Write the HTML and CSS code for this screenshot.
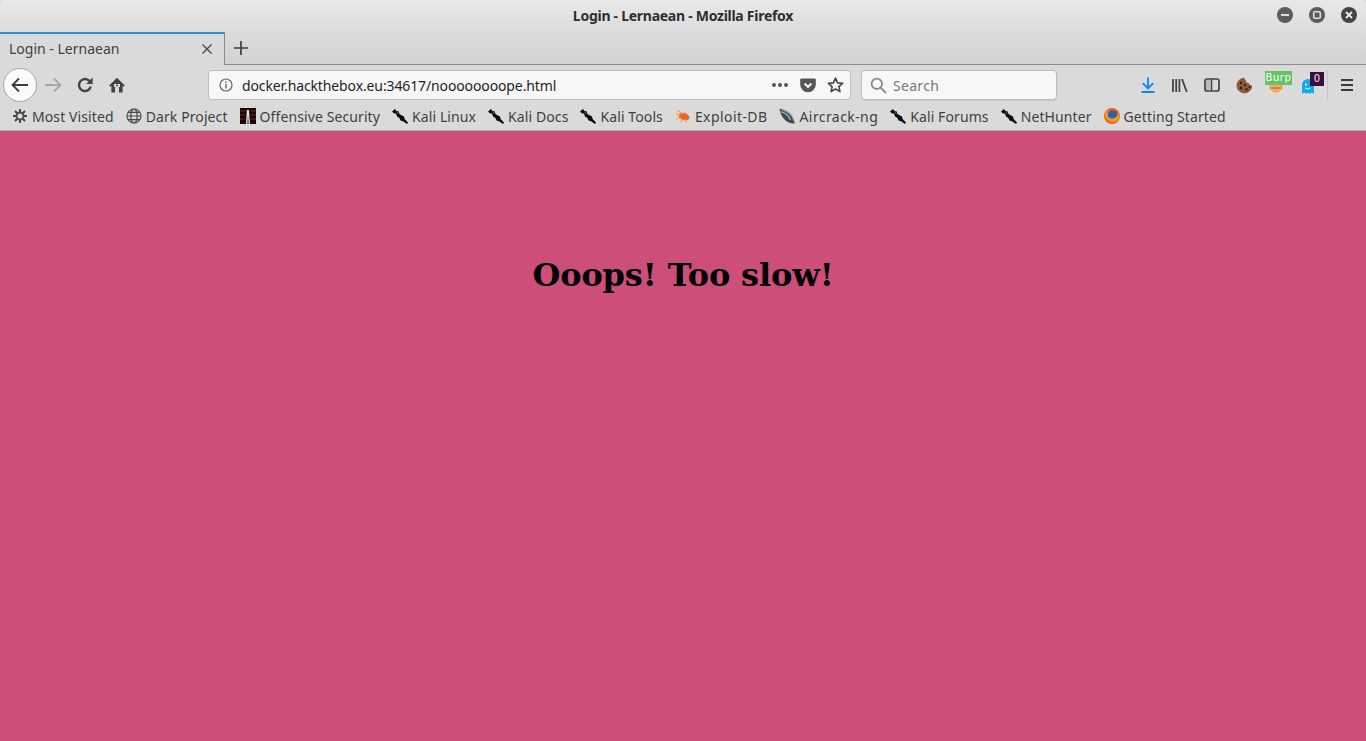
FILE: index.html
```html
<!DOCTYPE html>
<html lang="en">
<head>
  <meta charset="UTF-8">
  <meta name="viewport" content="width=device-width, initial-scale=1.0">
  <title>Login - Lernaean</title>
  <link rel="stylesheet" href="styles.css">
</head>
<body>
  <svg width="0" height="0" class="defs">
    <symbol id="kali" viewBox="0 0 16 16">
      <path d="M0 3.5 L3 1 L4.5 3 L6.5 3.2 L7.5 6 L10 7.6 L12 8.6 L12.6 11 L16 14.6 L15 16 L11 13.2 L8.6 12.6 L7.4 10 L5 8.4 L4 5.4 L2 5.6 Z" fill="#0a0a0a"/>
      <path d="M4.6 3.6 L6.4 6" stroke="#8a8a8a" stroke-width="0.8"/>
    </symbol>
  </svg>

  <header class="browser">
    <div class="titlebar">
      <span class="window-title">Login - Lernaean - Mozilla Firefox</span>
      <div class="window-controls">
        <span class="win-btn"><svg width="16" height="16" viewBox="0 0 16 16"><rect x="4" y="7" width="8" height="2" fill="#ddd"/></svg></span>
        <span class="win-btn"><svg width="16" height="16" viewBox="0 0 16 16"><rect x="4.7" y="4.7" width="6.6" height="6.6" rx="1" fill="none" stroke="#ddd" stroke-width="1.6"/></svg></span>
        <span class="win-btn win-close"><svg width="16" height="16" viewBox="0 0 16 16"><path d="M5 5 L11 11 M11 5 L5 11" stroke="#eee" stroke-width="1.8"/></svg></span>
      </div>
    </div>

    <div class="tabstrip">
      <div class="tab">
        <span class="tab-label">Login - Lernaean</span>
        <svg class="tab-close" width="12" height="12" viewBox="0 0 12 12"><path d="M1.5 1.5 L10.5 10.5 M10.5 1.5 L1.5 10.5" stroke="#4a4a4a" stroke-width="1.4"/></svg>
      </div>
      <div class="tab-rest">
        <svg class="new-tab" width="16" height="16" viewBox="0 0 16 16"><path d="M8 1 V15 M1 8 H15" stroke="#3c3c3c" stroke-width="1.7"/></svg>
      </div>
    </div>

    <div class="navbar">
      <div class="nav-left">
        <span class="back-btn"><svg width="18" height="16" viewBox="0 0 18 16"><path d="M1.5 8 H17 M8 1.5 L1.5 8 L8 14.5" fill="none" stroke="#3d3d3d" stroke-width="1.8"/></svg></span>
        <span class="nav-btn"><svg width="18" height="16" viewBox="0 0 18 16"><path d="M1 8 H16.5 M10 1.5 L16.5 8 L10 14.5" fill="none" stroke="#a6a6a6" stroke-width="1.8"/></svg></span>
        <span class="nav-btn"><svg width="16" height="16" viewBox="0 0 16 16"><path d="M13.8 9.5 A6 6 0 1 1 11.8 3.4 L13.8 5.2" fill="none" stroke="#444" stroke-width="2.4"/><path d="M15.6 0.6 V7 H9.2 Z" fill="#444"/></svg></span>
        <span class="nav-btn"><svg width="16" height="16" viewBox="0 0 16 16"><path d="M0.2 8.4 L8 0.8 L15.8 8.4 L14.6 9.7 L13.6 8.8 V15.4 H9.8 V11 H6.2 V15.4 H2.4 V8.8 L1.4 9.7 Z" fill="#444"/><rect x="5" y="7" width="6" height="3" fill="#dadada"/><rect x="6.2" y="10" width="3.6" height="5.4" fill="#dadada"/><rect x="7" y="7.8" width="2" height="1.4" fill="#444"/></svg></span>
      </div>

      <div class="urlbar">
        <svg class="info-icon" width="14" height="14" viewBox="0 0 14 14"><circle cx="7" cy="7" r="6" fill="none" stroke="#666" stroke-width="1.2"/><rect x="6.3" y="6" width="1.4" height="4.4" fill="#666"/><rect x="6.3" y="3.5" width="1.4" height="1.5" fill="#666"/></svg>
        <span class="url-text">docker.hackthebox.eu:34617/noooooooope.html</span>
        <span class="url-dots">
          <i></i><i></i><i></i>
        </span>
        <svg class="pocket" width="16" height="15" viewBox="0 0 16 15"><path d="M1.5 0.5 H14.5 A1.3 1.3 0 0 1 15.8 1.8 V6.5 A7.8 7.8 0 0 1 0.2 6.5 V1.8 A1.3 1.3 0 0 1 1.5 0.5 Z" fill="#555"/><path d="M4.5 5.5 L8 8.8 L11.5 5.5" fill="none" stroke="#f6f6f6" stroke-width="2"/></svg>
        <svg class="star" width="17" height="16" viewBox="0 0 17 16"><path d="M8.5 1.2 L10.6 5.8 L15.6 6.3 L11.9 9.6 L12.9 14.6 L8.5 12.1 L4.1 14.6 L5.1 9.6 L1.4 6.3 L6.4 5.8 Z" fill="none" stroke="#4a4a4a" stroke-width="1.7" stroke-linejoin="round"/></svg>
      </div>

      <div class="searchbar">
        <svg width="17" height="17" viewBox="0 0 17 17"><circle cx="6.8" cy="6.8" r="5.2" fill="none" stroke="#8a8a8a" stroke-width="1.8"/><path d="M10.6 10.6 L16 16" stroke="#8a8a8a" stroke-width="2"/></svg>
        <span class="search-text">Search</span>
      </div>

      <div class="nav-right">
        <span class="tool-btn"><svg width="14" height="16" viewBox="0 0 14 16"><path d="M7 0.5 V11 M1.8 6.2 L7 11.4 L12.2 6.2 M0.5 15 H13.5" fill="none" stroke="#0a84ff" stroke-width="1.8"/></svg></span>
        <span class="tool-btn"><svg width="16" height="15" viewBox="0 0 16 15"><path d="M1 1 V14 M4.2 1 V14 M7.4 1 V14 M10 1 L14.8 14" fill="none" stroke="#444" stroke-width="1.8"/></svg></span>
        <span class="tool-btn"><svg width="16" height="14" viewBox="0 0 16 14"><rect x="1" y="1" width="14" height="12" rx="2" fill="none" stroke="#444" stroke-width="1.7"/><rect x="2" y="2" width="5" height="10" fill="#bbb"/><path d="M7.6 1 V13" stroke="#444" stroke-width="1.4"/></svg></span>
        <span class="tool-btn"><svg width="17" height="17" viewBox="0 0 17 17"><path d="M8.5 0.8 A7.8 7.8 0 1 0 16.2 8.5 A3 3 0 0 1 13 6.2 A3 3 0 0 1 9.8 3.6 A3 3 0 0 1 8.5 0.8 Z" fill="#8f5a38"/><g fill="#2c1a10"><circle cx="5" cy="6" r="1.2"/><circle cx="9" cy="8" r="1.1"/><circle cx="5" cy="11" r="1.2"/><circle cx="10.5" cy="12.5" r="1.2"/><circle cx="13.5" cy="10" r="0.9"/></g></svg></span>
        <span class="tool-btn has-badge">
          <svg width="16" height="16" viewBox="0 0 16 16"><circle cx="8" cy="8" r="7" fill="#eab070"/><path d="M3 9 H13" stroke="#c87830" stroke-width="1.6"/><path d="M2 11 A6.5 6.5 0 0 0 14 11" fill="none" stroke="#e8dccb" stroke-width="2"/></svg>
          <span class="badge badge-burp">Burp</span>
        </span>
        <span class="tool-btn has-badge">
          <svg class="ghost" width="14" height="17" viewBox="0 0 14 17"><path d="M1 7 A6 6 0 0 1 13 7 V16 L10.7 14.5 L8.8 16 L7 14.5 L5.2 16 L3.3 14.5 L1 16 Z" fill="#12a8ee"/><circle cx="5" cy="6.5" r="1" fill="#fff"/><path d="M4 10 Q6.5 12 9 10" fill="none" stroke="#fff"/></svg>
          <span class="badge badge-count">0</span>
        </span>
        <span class="toolbar-sep"></span>
        <span class="tool-btn menu-btn"><svg width="14" height="12" viewBox="0 0 14 12"><path d="M1 1 H13 M1 6 H13 M1 11 H13" stroke="#3c3c3c" stroke-width="1.8"/></svg></span>
      </div>
    </div>

    <div class="bookmarks">
      <a class="bookmark"><svg class="bm-small" width="14" height="14" viewBox="0 0 14 14"><circle cx="7" cy="7" r="3.6" fill="none" stroke="#4a4a4a" stroke-width="2"/><path d="M7 0 V3 M7 11 V14 M0 7 H3 M11 7 H14 M2 2 L4.2 4.2 M9.8 9.8 L12 12 M12 2 L9.8 4.2 M4.2 9.8 L2 12" stroke="#4a4a4a" stroke-width="2"/></svg>Most Visited</a>
      <a class="bookmark"><svg width="16" height="16" viewBox="0 0 16 16"><g fill="none" stroke="#4a4a4a" stroke-width="1.2"><circle cx="8" cy="8" r="7"/><ellipse cx="8" cy="8" rx="3.2" ry="7"/><path d="M1 8 H15 M2 4.3 H14 M2 11.7 H14"/></g></svg>Dark Project</a>
      <a class="bookmark"><svg width="16" height="16" viewBox="0 0 16 16"><rect width="16" height="16" fill="#1c0606"/><path d="M0 3 H6 M0 7 H5 M0 11 H5 M11 3 H16 M11 7 H16 M11 11 H16" stroke="#6a2a2a"/><path d="M6.8 2 H9 L10 16 H8.6 L8 7 L7.4 16 H6 Z" fill="#e8e0e0"/></svg>Offensive Security</a>
      <a class="bookmark"><svg width="16" height="16"><use href="#kali"/></svg>Kali Linux</a>
      <a class="bookmark"><svg width="16" height="16"><use href="#kali"/></svg>Kali Docs</a>
      <a class="bookmark"><svg width="16" height="16"><use href="#kali"/></svg>Kali Tools</a>
      <a class="bookmark bm-wide"><svg width="16" height="16" viewBox="0 0 16 16"><ellipse cx="9" cy="8.6" rx="5.6" ry="3.6" fill="#f0641e" transform="rotate(18 9 8.6)"/><path d="M0.5 5.5 L5 7.5 M3 2.5 L7 6 M1 11 L6 10 M5 14.5 L8 11 M11.5 14.5 L10 11 M11 3.5 L10 6" stroke="#f59a68" stroke-width="1.1"/></svg>Exploit-DB</a>
      <a class="bookmark bm-wide"><svg width="16" height="16" viewBox="0 0 16 16"><path d="M0.5 1 C8 0.5 15.5 7.5 15.5 15.5 C9 16 2 11 0.5 1 Z" fill="#40494e"/><path d="M3 1.6 C9 2.4 14 7.5 15 12.5 M1.6 3.6 C6 4.5 10 8 11.5 12" fill="none" stroke="#9db9c8" stroke-width="1.3"/></svg>Aircrack-ng</a>
      <a class="bookmark"><svg width="16" height="16"><use href="#kali"/></svg>Kali Forums</a>
      <a class="bookmark"><svg width="16" height="16"><use href="#kali"/></svg>NetHunter</a>
      <a class="bookmark"><svg width="16" height="16" viewBox="0 0 16 16"><circle cx="8" cy="8" r="8" fill="#e8641b"/><circle cx="8.8" cy="7" r="4.8" fill="#2b62ad"/><path d="M0.6 6.5 C1.5 13 9 16 13.4 12.4 C15.6 10.4 16 6 14.4 3 C14.4 7 12.4 10 8.6 10.4 C5.6 10.7 3.6 9 3.6 6 C3 4.5 3.6 3 5 1.8 C2.6 2.6 1 4.4 0.6 6.5 Z" fill="#f39a1f"/></svg>Getting Started</a>
    </div>
  </header>

  <main class="page">
    <h1>Ooops! Too slow!</h1>
  </main>
</body>
</html>
```

FILE: styles.css
```css
* {
  box-sizing: border-box;
}

html, body {
  height: 100%;
  margin: 0;
}

body {
  display: flex;
  flex-direction: column;
  overflow: hidden;
  background: #ce4e7a;
  font-family: "Noto Sans", sans-serif;
}

.defs {
  position: absolute;
}

svg {
  display: block;
  flex: none;
}

/* Browser chrome */
.browser {
  height: 131px;
  flex: none;
  border-bottom: 1px solid #a9a9a9;
  background: #dadada;
  color: #3a3a3a;
}

.titlebar {
  position: relative;
  height: 32px;
  display: flex;
  justify-content: center;
  align-items: center;
  padding-bottom: 2px;
  border-radius: 5px 5px 0 0;
  background: linear-gradient(#e9e9e9, #dcdcdc);
}

.window-title {
  font-size: 14px;
  font-weight: 700;
  letter-spacing: -0.27px;
  color: #2e2e2e;
}

.window-controls {
  position: absolute;
  top: 7px;
  right: 9px;
  display: flex;
  gap: 16px;
}

.win-btn {
  width: 16px;
  height: 16px;
  border-radius: 50%;
  background: #5c5c5c;
}

.win-close {
  background: #444;
}

/* Tabs */
.tabstrip {
  height: 33px;
  display: flex;
}

.tab {
  width: 225px;
  display: flex;
  align-items: center;
  justify-content: space-between;
  padding: 0 11px 2px 9px;
  border-top: 2px solid #2a90d8;
  border-right: 1px solid #8a8a8a;
  background: #dadada;
}

.tab-label {
  font-size: 14px;
  color: #3f3f3f;
}

.tab-rest {
  flex: 1;
  display: flex;
  align-items: center;
  padding-left: 8px;
  border-bottom: 1px solid #8c8c8c;
  background: linear-gradient(#dcdcdc, #d2d2d2);
}

/* Navigation toolbar */
.navbar {
  height: 40px;
  display: flex;
  align-items: center;
}

.nav-left {
  width: 208px;
  flex: none;
  display: flex;
  align-items: center;
  padding-left: 3px;
}

.back-btn {
  width: 34px;
  height: 34px;
  display: flex;
  align-items: center;
  justify-content: center;
  border: 1px solid #a8a8a8;
  border-radius: 50%;
  background: #fafafa;
}

.nav-btn {
  width: 32px;
  display: flex;
  justify-content: center;
}

.urlbar {
  width: 643px;
  height: 30px;
  display: flex;
  align-items: center;
  padding: 0 6px 0 10px;
  border: 1px solid #bdbdbd;
  border-radius: 4px;
  background: #f7f7f7;
}

.url-text {
  flex: 1;
  margin-left: 9px;
  font-size: 14px;
  letter-spacing: -0.12px;
  color: #1f1f1f;
}

.url-dots {
  display: flex;
  gap: 2px;
  margin-right: 12px;
}

.url-dots i {
  width: 4px;
  height: 4px;
  border-radius: 50%;
  background: #555;
}

.star {
  margin-left: 11px;
}

.searchbar {
  width: 196px;
  height: 30px;
  margin-left: 10px;
  display: flex;
  align-items: center;
  gap: 6px;
  padding-left: 8px;
  border: 1px solid #bdbdbd;
  border-radius: 4px;
  background: #f7f7f7;
  box-shadow: 0 1px 1px rgba(0, 0, 0, 0.08);
}

.search-text {
  font-size: 14px;
  letter-spacing: 0.3px;
  color: #777;
}

.nav-right {
  flex: 1;
  display: flex;
  align-items: center;
  padding-left: 75px;
}

.tool-btn {
  position: relative;
  width: 32px;
  display: flex;
  justify-content: center;
}

.has-badge svg {
  margin-top: 4px;
}

.has-badge .ghost {
  margin-top: 2px;
}

.badge {
  position: absolute;
  top: -4px;
  height: 14px;
  font-size: 10px;
  line-height: 13px;
  text-align: center;
  font-family: "DejaVu Sans", sans-serif;
}

.badge-burp {
  left: 5px;
  width: 27px;
  letter-spacing: 0.6px;
  background: #62c462;
  color: #fff;
}

.badge-count {
  left: 18px;
  width: 14px;
  background: #3a0f3a;
  color: #e8e8e8;
}

.toolbar-sep {
  width: 1px;
  height: 30px;
  margin-left: 3px;
  background: #c2c2c2;
}

.menu-btn {
  margin-left: 3px;
}

/* Bookmarks toolbar */
.bookmarks {
  height: 25px;
  display: flex;
  align-items: flex-start;
  gap: 12px;
  padding: 1px 0 0 12px;
}

.bookmark {
  display: flex;
  align-items: center;
  gap: 4px;
  height: 20px;
  font-size: 14px;
  letter-spacing: 0.1px;
  color: #3f3f3f;
}

.bm-wide {
  letter-spacing: 0.42px;
}

.bm-small {
  margin: 0 1px;
}

/* Page */
.page {
  flex: 1;
  padding-top: 124px;
}

h1 {
  margin: 0;
  font-family: "DejaVu Serif", serif;
  font-size: 32px;
  font-weight: 700;
  line-height: 41px;
  letter-spacing: -0.13px;
  text-align: center;
  color: #000;
}
```
